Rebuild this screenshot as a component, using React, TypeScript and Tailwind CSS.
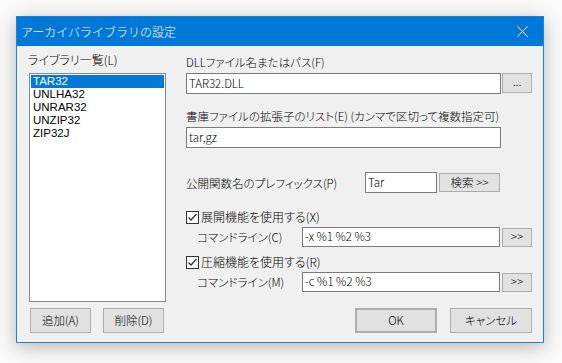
import React from 'react';

const font = "font-['Noto_Sans_CJK_JP','Noto_Sans',sans-serif] [font-feature-settings:'palt'] font-light";

const libs = ['TAR32', 'UNLHA32', 'UNRAR32', 'UNZIP32', 'ZIP32J'];

function Btn({ children, className = '' }: { children: React.ReactNode; className?: string }) {
  return (
    <div
      className={`flex items-center justify-center border border-[#adadad] bg-[#e1e1e1] text-[11.5px] leading-none text-black ${className}`}
    >
      {children}
    </div>
  );
}

function Field({ value, className = '' }: { value: string; className?: string }) {
  return (
    <div className={`flex items-center border border-[#7a7a7a] bg-white pl-[2px] text-[11.5px] text-black ${className}`}>
      {value}
    </div>
  );
}

function Check({ label }: { label: string }) {
  return (
    <div className="flex h-[16px] items-center gap-[2px]">
      <div className="flex h-[13px] w-[13px] items-center justify-center border border-[#333] bg-white">
        <svg width="11" height="11" viewBox="0 0 11 11">
          <path d="M1.5 5.5 L4 8 L9.5 2" fill="none" stroke="#333" strokeWidth="1.3" />
        </svg>
      </div>
      <span className="text-[12px] leading-[16px]">{label}</span>
    </div>
  );
}

function CmdRow({ label, value }: { label: string; value: string }) {
  return (
    <div className="flex h-[20px] items-center">
      <span className="w-[116px] pl-[11px] text-[11.5px] leading-[16px]">{label}</span>
      <Field value={value} className="h-[20px] w-[198px]" />
      <Btn className="ml-[2px] h-[19px] w-[30px]">&gt;&gt;</Btn>
    </div>
  );
}

export default function App() {
  return (
    <div className={`h-[363px] w-[562px] overflow-hidden bg-[#fafafa] pt-[16px] pl-[16px] ${font}`}>
      <div className="flex h-[327px] w-[528px] flex-col border border-[#1883d7] bg-[#f0f0f0] shadow-[0_4px_18px_rgba(0,0,0,0.28)]">
        {/* title bar */}
        <div className="flex h-[29px] shrink-0 items-center justify-between bg-[#0078d7] pl-[4px] pr-[15px] text-white">
          <span className="text-[12px] leading-none [font-feature-settings:normal]">アーカイバライブラリの設定</span>
          <svg width="11" height="11" viewBox="0 0 11 11">
            <path d="M0.5 0.5 L10.5 10.5 M10.5 0.5 L0.5 10.5" stroke="white" strokeWidth="1" />
          </svg>
        </div>

        {/* body */}
        <div className="flex flex-1 flex-col">
          <div className="flex pl-[12px] pr-[11px]">
            {/* left column */}
            <div className="flex w-[137px] flex-col">
              <span className="-ml-px mt-[6px] text-[12px] leading-[16px]">ライブラリ一覧(L)</span>
              <div className="mt-[5px] h-[229px] border border-[#828790] bg-white p-px">
                {libs.map((l, i) => (
                  <div
                    key={l}
                    className={`h-[13px] pl-[2px] font-['Liberation_Sans',Arial,sans-serif] text-[11.5px] font-normal leading-[13px] ${i === 0 ? 'bg-[#0078d7] text-white' : 'text-black'}`}
                  >
                    {l}
                  </div>
                ))}
              </div>
            </div>

            {/* right column */}
            <div className="ml-[20px] flex w-[346px] flex-col">
              <span className="mt-[8px] text-[11.5px] leading-[16px]">DLLファイル名またはパス(F)</span>
              <div className="mt-[3px] flex items-start">
                <Field value="TAR32.DLL" className="h-[21px] w-[315px]" />
                <Btn className="ml-px h-[20px] w-[30px] pb-[3px]">...</Btn>
              </div>

              <span className="mt-[14px] text-[11.5px] leading-[16px]">
                書庫ファイルの拡張子のリスト(E) (カンマで区切って複数指定可)
              </span>
              <Field value="tar,gz" className="mt-[3px] h-[21px] w-[315px]" />

              <div className="mt-[24px] flex h-[21px] items-center">
                <span className="w-[179px] text-[11.5px] leading-[16px]">公開関数名のプレフィックス(P)</span>
                <Field value="Tar" className="h-[21px] w-[72px]" />
                <Btn className="ml-[2px] h-[19px] w-[61px]">検索 &gt;&gt;</Btn>
              </div>

              <div className="mt-[16px]">
                <Check label="展開機能を使用する(X)" />
              </div>
              <div className="mt-[2px]">
                <CmdRow label="コマンドライン(C)" value="-x %1 %2 %3" />
              </div>

              <div className="mt-[7px]">
                <Check label="圧縮機能を使用する(R)" />
              </div>
              <div className="mt-[2px]">
                <CmdRow label="コマンドライン(M)" value="-c %1 %2 %3" />
              </div>
            </div>
          </div>

          {/* bottom buttons */}
          <div className="mt-[6px] flex items-center justify-between pl-[13px] pr-[11px]">
            <div className="flex gap-[12px]">
              <Btn className="h-[25px] w-[61px]">追加(A)</Btn>
              <Btn className="h-[25px] w-[61px]">削除(D)</Btn>
            </div>
            <div className="flex gap-[13px]">
              <Btn className="h-[25px] w-[82px] border-2 border-[#0078d7]">OK</Btn>
              <Btn className="h-[25px] w-[82px]">キャンセル</Btn>
            </div>
          </div>
        </div>
      </div>
    </div>
  );
}
